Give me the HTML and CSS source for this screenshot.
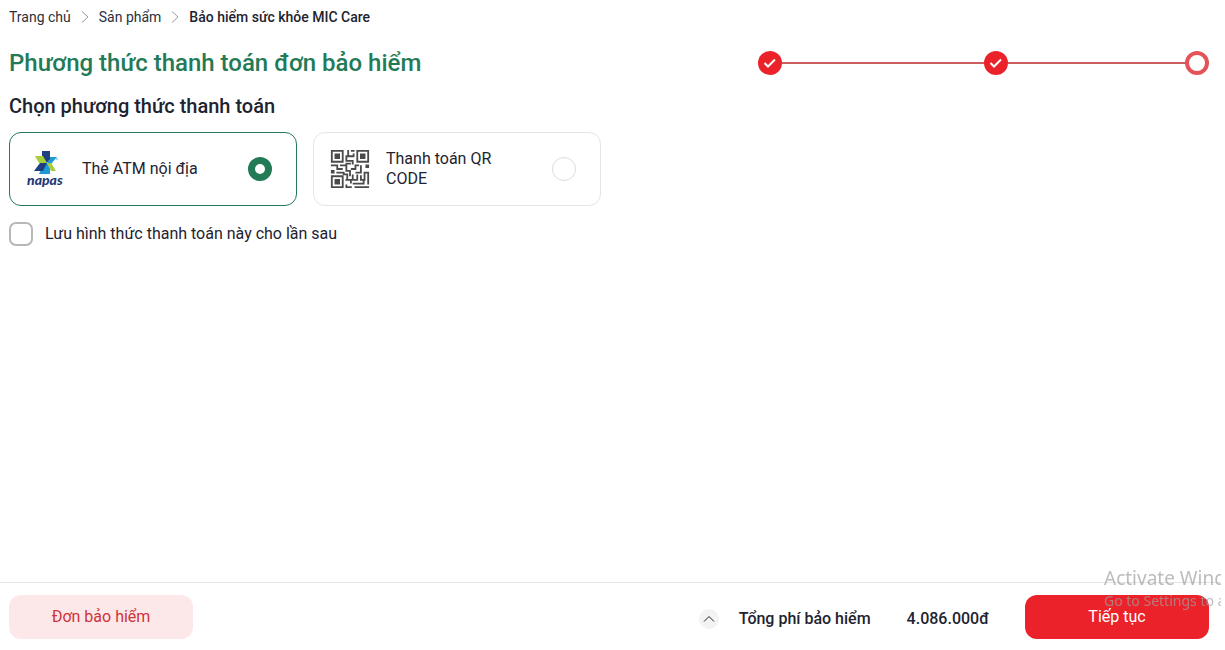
FILE: index.html
```html
<!DOCTYPE html>
<html lang="vi">
<head>
  <meta charset="UTF-8" />
  <meta name="viewport" content="width=device-width, initial-scale=1.0"/>
  <title>Phương thức thanh toán đơn bảo hiểm</title>
  <link rel="stylesheet" href="styles.css">
</head>
<body>

<main class="page">
  <nav class="breadcrumb">
    <a href="#">Trang chủ</a>
    <svg width="8" height="12" viewBox="0 0 8 12"><path d="M1 0.5l6 5.5-6 5.5"/></svg>
    <a href="#">Sản phẩm</a>
    <svg width="8" height="12" viewBox="0 0 8 12"><path d="M1 0.5l6 5.5-6 5.5"/></svg>
    <a href="#" class="current">Bảo hiểm sức khỏe MIC Care</a>
  </nav>

  <header class="heading">
    <h1>Phương thức thanh toán đơn bảo hiểm</h1>
    <ol class="stepper">
      <li class="done"><svg width="24" height="24" viewBox="0 0 24 24"><circle cx="12" cy="12" r="12"/><path d="M6.5 12l3.5 3.5 7-7"/></svg></li>
      <li class="done"><svg width="24" height="24" viewBox="0 0 24 24"><circle cx="12" cy="12" r="12"/><path d="M6.5 12l3.5 3.5 7-7"/></svg></li>
      <li class="last"></li>
    </ol>
  </header>

  <h2>Chọn phương thức thanh toán</h2>

  <form id="payment">
    <div class="methods">
      <label class="method">
        <svg class="method-icon" width="40" height="40" viewBox="0 0 40 40">
          <path fill="#1b9ad6" d="M24 8h7l-6 7h-4z"/>
          <path fill="#1b9ad6" d="M16 18l5-4 3 5v6H13z"/>
          <path fill="#1f4080" d="M16 2h8v8l-4 5-4-5z"/>
          <path fill="#a6ce39" d="M9 7h8l4 7h-8z"/>
          <path fill="#1f4080" d="M14 14h7l-4 8H8z"/>
          <path fill="#a6ce39" d="M21 14h4l5 8h-5z"/>
          <circle cx="31" cy="10" r="1" fill="#8ac9e8"/>
          <text x="1" y="36">napas</text>
        </svg>
        <span>Thẻ ATM nội địa</span>
        <input type="radio" name="method" value="atm" checked>
      </label>
      <label class="method">
        <svg class="method-icon qr" width="40" height="40" viewBox="-0.5 -0.5 22 22">
          <path d="M.5.5h6v6h-6zM14.5.5h6v6h-6zM.5 14.5h6v6h-6z"/>
          <path class="fill" d="M2 2h3v3H2zM16 2h3v3h-3zM2 16h3v3H2zM0 11h2v2H0zM19 8h2v2h-2z"/>
          <path d="M11 .5h2M9.5 0v3M8 3.5h4.5V2M8.5 3v3h3.500v2M8 7.500h3M0 8.500h3.500v2h3M5 8.500h3.500v3h2v3M3 12.500h4v1h2v3M11 10.500h2.500v-2h2M13.500 12.500h3v-4M12 13.500v3h2.500v-3M16.500 14v2.500h2v-4H21M20.500 12v7M8 16.500h3v2M8.500 19v1.500h3M12 18.500h6v-2M13 20.500h8"/>
        </svg>
        <span>Thanh toán QR CODE</span>
        <input type="radio" name="method" value="qr">
      </label>
    </div>

    <label class="save">
      <input type="checkbox" name="save">
      <span>Lưu hình thức thanh toán này cho lần sau</span>
    </label>
  </form>
</main>

<footer class="bottom-bar">
  <button type="button" class="btn btn-light">Đơn bảo hiểm</button>
  <div class="actions">
    <div class="summary">
      <button type="button" class="toggle" aria-label="Chi tiết">
        <svg width="12" height="8" viewBox="0 0 12 8"><path d="M1 6.500l5-5 5 5"/></svg>
      </button>
      <span>Tổng phí bảo hiểm</span>
      <span class="total">4.086.000đ</span>
    </div>
    <button type="submit" form="payment" class="btn btn-primary">Tiếp tục</button>
  </div>
</footer>

<div class="watermark">
  <p class="watermark-title">Activate Windows</p>
  <p>Go to Settings to activate Windows.</p>
</div>

</body>
</html>
```
FILE: styles.css
```css
* { margin: 0; padding: 0; box-sizing: border-box; }

body {
  background: #fff;
  color: #1e2330;
  font-family: Roboto, "Liberation Sans", sans-serif;
  font-size: 16px;
  line-height: 20px;
}

.page {
  padding: 7px 16px 80px 9px;
}

.breadcrumb {
  display: flex;
  align-items: center;
  gap: 10px;
  font-size: 14px;
}
.breadcrumb a {
  color: #2b303c;
  text-decoration: none;
}
.breadcrumb .current {
  color: #1e2330;
  font-weight: 500;
}
.breadcrumb svg {
  fill: none;
  stroke: #9a9ca2;
}

.heading {
  display: flex;
  align-items: center;
  justify-content: space-between;
  margin-top: 20px;
}
h1 {
  color: #237a57;
  font-size: 24px;
  font-weight: 500;
  line-height: 32px;
}
h2 {
  margin-top: 14px;
  font-size: 20px;
  font-weight: 500;
  line-height: 26px;
}

.stepper {
  display: flex;
  width: 38%;
  max-width: 451px;
  list-style: none;
}
.stepper li {
  display: flex;
  align-items: center;
  flex: 1;
}
.stepper li.done::after {
  content: "";
  flex: 1;
  height: 2px;
  background: #cb5c60;
}
.stepper circle { fill: #eb2229; }
.stepper path {
  fill: none;
  stroke: #fff;
  stroke-width: 2;
}
.stepper li.last {
  flex: none;
  width: 24px;
  height: 24px;
  margin-left: -24px;
  border: 4px solid #e25457;
  border-radius: 50%;
  background: #fff;
}

.methods {
  display: flex;
  flex-wrap: wrap;
  gap: 16px;
  margin-top: 13px;
}
.method {
  display: flex;
  align-items: center;
  gap: 16px;
  width: 288px;
  min-height: 74px;
  padding: 16px 24px 16px 16px;
  border: 1px solid #e4e4e6;
  border-radius: 12px;
  cursor: pointer;
}
.method:has(input:checked) { border-color: #237a57; }
.method span { flex: 1; }
.method-icon { flex: none; }
.method-icon text {
  fill: #1f3a78;
  font-family: Lato, sans-serif;
  font-size: 14px;
  font-style: italic;
  font-weight: 900;
}
.qr path {
  fill: none;
  stroke: #4b4b4b;
}
.qr .fill {
  fill: #4b4b4b;
  stroke: none;
}

input[type="radio"],
input[type="checkbox"] {
  appearance: none;
  flex: none;
  width: 24px;
  height: 24px;
  background: #fff;
  cursor: pointer;
}
input[type="radio"] {
  border: 1px solid #dcdce0;
  border-radius: 50%;
}
input[type="radio"]:checked { border: 7px solid #237a57; }
input[type="checkbox"] {
  border: 2px solid #b8b8b8;
  border-radius: 7px;
}
input[type="checkbox"]:checked { background: #237a57; }

.save {
  display: inline-flex;
  align-items: center;
  gap: 12px;
  margin-top: 16px;
  cursor: pointer;
}

.bottom-bar {
  position: fixed;
  right: 4px;
  bottom: 0;
  left: 0;
  display: flex;
  align-items: center;
  justify-content: space-between;
  padding: 12px 12px 11px 9px;
  border-top: 1px solid #e4e4e6;
  background: #fff;
}
.actions {
  display: flex;
  align-items: center;
  gap: 36px;
}
.summary {
  display: flex;
  align-items: center;
  padding-top: 4px;
  font-weight: 500;
}
.total { margin-left: 36px; }

.btn {
  width: 184px;
  height: 44px;
  border: none;
  border-radius: 12px;
  font: inherit;
  font-weight: 400;
  cursor: pointer;
}
.btn-light {
  background: #fde8e9;
  color: #cf3339;
}
.btn-primary {
  background: #eb2229;
  color: #fff;
}

.toggle {
  display: flex;
  align-items: center;
  justify-content: center;
  width: 20px;
  height: 20px;
  margin-right: 20px;
  border: none;
  border-radius: 50%;
  background: #f3f3f4;
  cursor: pointer;
}
.toggle path {
  fill: none;
  stroke: #222;
}

/* system notice over the corner of the screen */
.watermark {
  position: fixed;
  right: 4px;
  bottom: 39px;
  width: 117px;
  overflow: hidden;
  color: rgba(160, 160, 160, 0.7);
  font-family: "Noto Sans", "Open Sans", sans-serif;
  font-size: 14px;
  white-space: nowrap;
  pointer-events: none;
}
.watermark-title {
  font-size: 19px;
  line-height: 26px;
}
```
